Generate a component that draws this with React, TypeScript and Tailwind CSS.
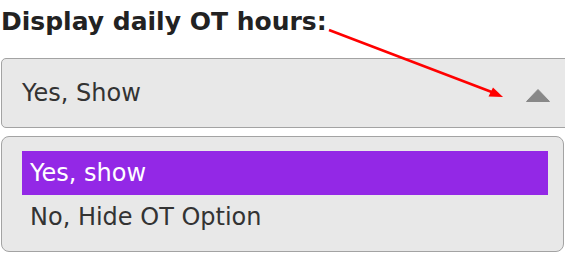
import React from "react";

export default function App() {
  const font = { fontFamily: '"DejaVu Sans", "Open Sans", sans-serif' };
  return (
    <div
      className="relative w-[565px] h-[253px] overflow-hidden bg-white text-[#222]"
      style={font}
    >
      <div className="pl-[1px] pt-[5px] h-[50px] text-[25px] font-bold leading-[34px]">
        Display daily OT hours:
      </div>
      <div className="mt-[8px] ml-[1px] w-[600px] h-[70px] flex items-center justify-between rounded-[5px] border border-[#a3a3a3] bg-[#e8e8e8] pl-[20px] pr-[50px]">
        <span className="text-[24px] leading-[30px] text-[#333]">Yes, Show</span>
        <svg width="24" height="13" viewBox="0 0 24 13" className="mt-[4px]">
          <polygon points="12,0.5 23.5,12.5 0.5,12.5" fill="#888" stroke="#888" strokeLinejoin="round" strokeWidth="1" />
        </svg>
      </div>
      <div className="mt-[8px] ml-[1px] w-[563px] h-[116px] rounded-[8px] border border-[#a3a3a3] bg-[#e8e8e8] pl-[20px] pr-[15px] pt-[14px]">
        <div className="h-[44px] flex items-center bg-[#9328e6] px-[8px] text-[24px] text-white">
          Yes, show
        </div>
        <div className="h-[44px] flex items-center px-[8px] text-[24px] text-[#333]">
          No, Hide OT Option
        </div>
      </div>
      <svg className="absolute left-0 top-0 pointer-events-none" width="565" height="253">
        <line x1="329" y1="30" x2="493" y2="92.5" stroke="#ff0000" strokeWidth="2.5" />
        <polygon points="503,97 493,87.5 488.5,96.5" fill="#ff0000" />
      </svg>
    </div>
  );
}
